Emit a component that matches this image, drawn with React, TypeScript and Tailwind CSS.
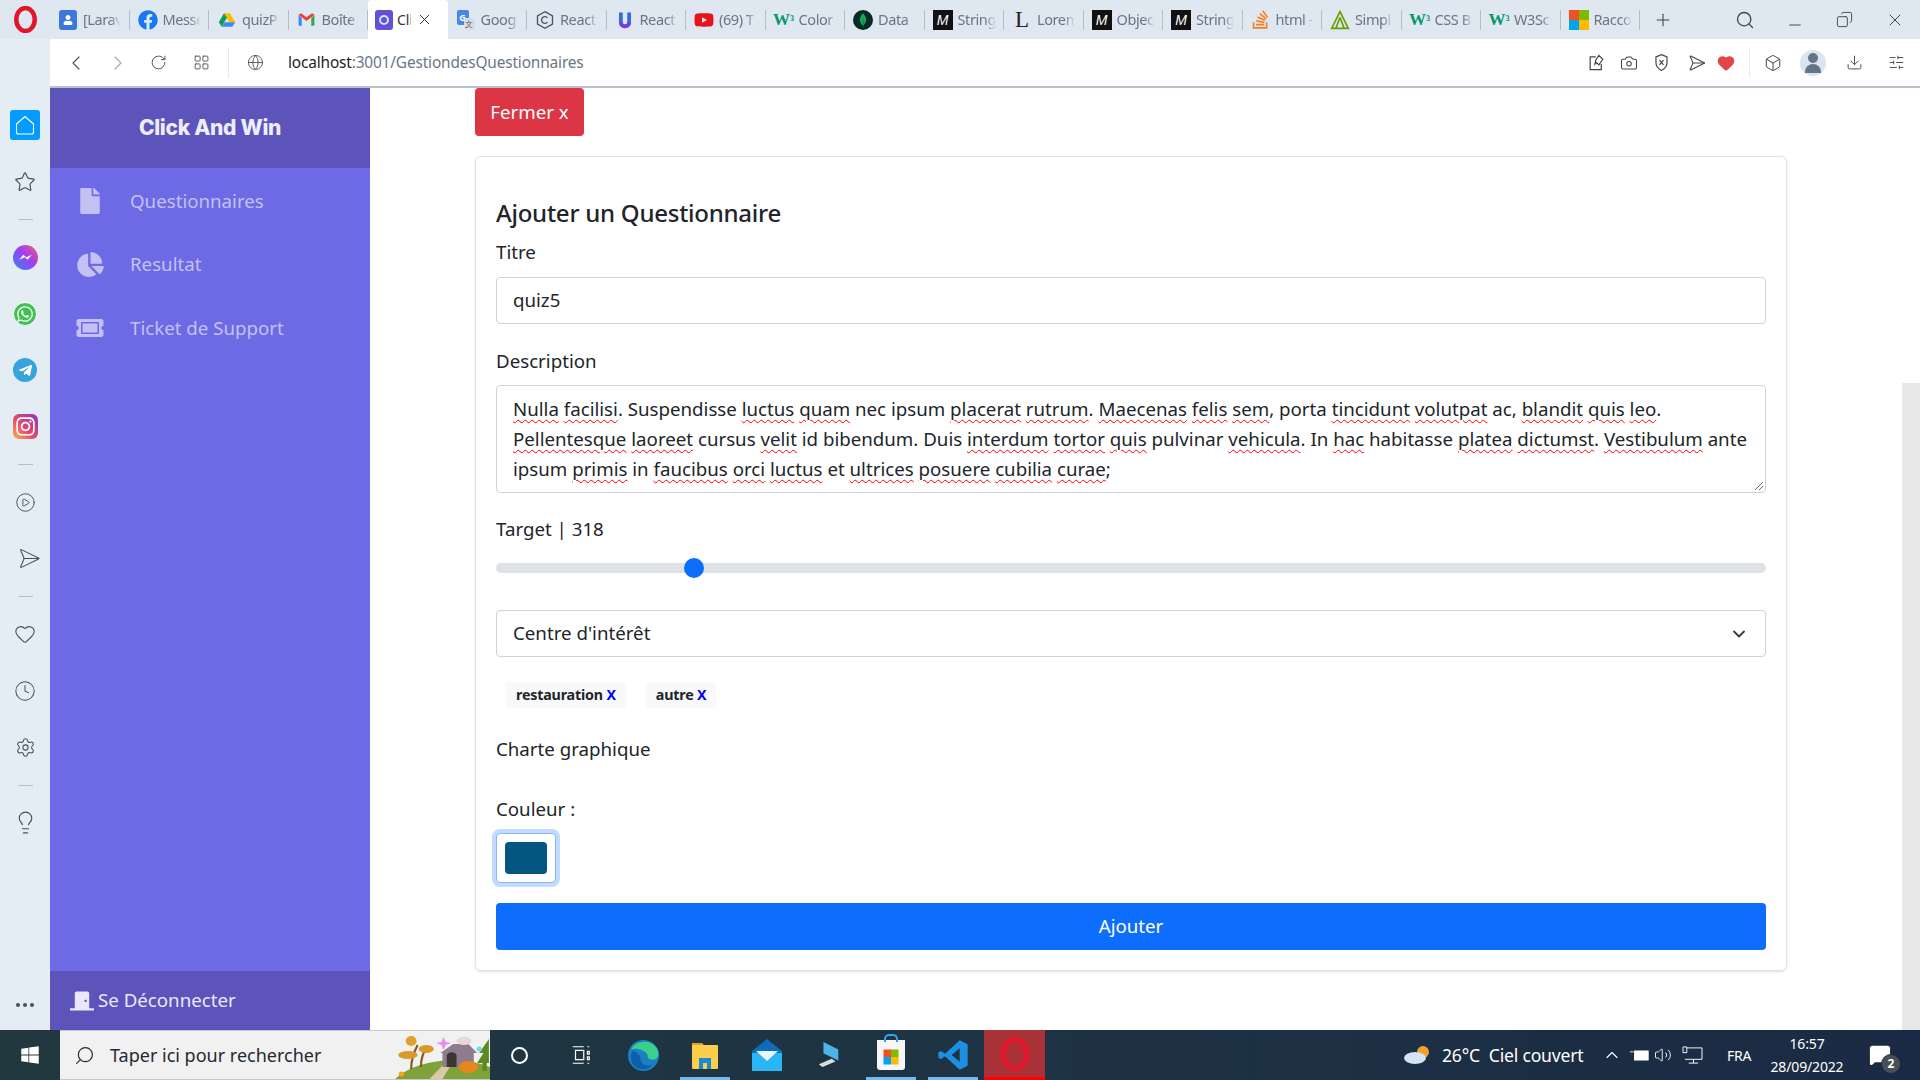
import React from 'react';
import {
  Search, Minus, Copy, X, Plus, ChevronLeft, ChevronRight, RotateCw, LayoutGrid, Globe, Camera,
  Box, Download, SlidersHorizontal, Heart, Send, Star, CirclePlay, Clock, Settings, Lightbulb,
  ChevronDown, ChevronUp, Volume2, MessageSquare,
} from 'lucide-react';
import {
  FaFacebook, FaUser, FaYoutube, FaStackOverflow, FaFile, FaChartPie, FaTicketAlt, FaDoorClosed,
  FaWhatsapp, FaTelegramPlane, FaInstagram, FaWindows,
} from 'react-icons/fa';
import { SiMongodb } from 'react-icons/si';

const uiFont = "font-['Noto_Sans',sans-serif]";

const OperaLogo = ({ className }: { className: string }) => (
  <svg viewBox="0 0 24 24" className={className}>
    <ellipse cx="12" cy="12" rx="8.2" ry="10.2" fill="none" stroke="#e0162b" strokeWidth="4" />
  </svg>
);

const DriveIcon = () => (
  <svg viewBox="0 0 24 24" className="w-[18px] h-[18px]">
    <path d="M8 3h8l7 12h-8z" fill="#fbbc04" />
    <path d="M8 3L1 15l4 6 7-12z" fill="#0f9d58" />
    <path d="M5 21h14l4-6H9z" fill="#4285f4" />
  </svg>
);

const GmailIcon = () => (
  <svg viewBox="0 0 24 24" className="w-[19px] h-[19px]">
    <path d="M2 6v14h4V10z" fill="#4285f4" />
    <path d="M22 6v14h-4V10z" fill="#34a853" />
    <path d="M2 6l10 8 10-8-3-2-7 5-7-5z" fill="#ea4335" />
  </svg>
);

const AppLogoIcon = () => (
  <div className="w-[18px] h-[20px] rounded-[3px] bg-[#6450d8] flex items-center justify-center">
    <div className="w-[10px] h-[10px] rounded-full border-2 border-[#cfe8ff]" />
  </div>
);

const ReactHexIcon = () => (
  <svg viewBox="0 0 24 24" className="w-[20px] h-[20px]" fill="none" stroke="#4b5563" strokeWidth="1.6">
    <path d="M12 2l9 5v10l-9 5-9-5V7z" />
    <path d="M15 9.5a4 4 0 1 0 0 5" />
  </svg>
);

const UIcon = () => (
  <svg viewBox="0 0 24 24" className="w-[18px] h-[22px]">
    <path d="M4 2h5v13a3 3 0 0 0 6 0V2h5v13a8 8 0 0 1-16 0z" fill="#2f6fe0" />
    <path d="M4 15a8 8 0 0 0 16 0h-5a3 3 0 0 1-6 0z" fill="#7b3fd6" />
  </svg>
);

const TranslateIcon = () => (
  <div className="relative w-[18px] h-[20px]">
    <div className="absolute left-0 top-0 w-[12px] h-[15px] rounded-[2px] bg-[#4a86e8] text-white text-[9px] leading-[15px] text-center font-bold">G</div>
    <div className="absolute right-0 bottom-0 w-[11px] h-[12px] rounded-[2px] bg-[#d8dde3] text-[#555] text-[8px] leading-[12px] text-center">文</div>
  </div>
);

const W3Icon = () => (
  <span className="text-[#04966a] text-[17px] font-bold leading-none font-['Liberation_Serif',serif]">
    W<sup className="text-[8px]">3</sup>
  </span>
);

const MediumIcon = () => (
  <span className="w-[20px] h-[20px] bg-[#111] text-white text-[14px] italic leading-[20px] text-center font-['Liberation_Sans',sans-serif]">M</span>
);

const LoremIcon = () => (
  <span className="text-[#222] text-[23px] leading-none font-['Liberation_Serif',serif]">L</span>
);

const SimplIcon = () => (
  <svg viewBox="0 0 24 24" className="w-[21px] h-[22px]" fill="none" stroke="#6aa100" strokeWidth="2">
    <path d="M12 2L2 22h20z" />
    <path d="M12 9L7 22M12 9l5 13" />
  </svg>
);

const MsIcon = () => (
  <div className="grid grid-cols-2 w-[20px] h-[20px]">
    <div className="bg-[#f25022]" />
    <div className="bg-[#7fba00]" />
    <div className="bg-[#00a4ef]" />
    <div className="bg-[#ffb900]" />
  </div>
);

type Tab = { label: string; icon: React.ReactNode; active?: boolean };

const tabs: Tab[] = [
  { label: '[Larav', icon: <div className="w-[18px] h-[20px] rounded-[3px] bg-[#3b78d8] flex items-center justify-center"><FaUser className="w-[10px] h-[10px] text-white" /></div> },
  { label: 'Messe', icon: <FaFacebook className="w-[20px] h-[20px] text-[#1877f2]" /> },
  { label: 'quizP', icon: <DriveIcon /> },
  { label: 'Boîte', icon: <GmailIcon /> },
  { label: 'Cli', icon: <AppLogoIcon />, active: true },
  { label: 'Goog', icon: <TranslateIcon /> },
  { label: 'React', icon: <ReactHexIcon /> },
  { label: 'React', icon: <UIcon /> },
  { label: '(69) T', icon: <FaYoutube className="w-[20px] h-[20px] text-[#e8131b]" /> },
  { label: 'Color', icon: <W3Icon /> },
  { label: 'Data', icon: <div className="w-[20px] h-[20px] rounded-full bg-[#062a24] flex items-center justify-center"><SiMongodb className="w-[14px] h-[14px] text-[#13aa52]" /></div> },
  { label: 'String', icon: <MediumIcon /> },
  { label: 'Lorem', icon: <LoremIcon /> },
  { label: 'Objec', icon: <MediumIcon /> },
  { label: 'String', icon: <MediumIcon /> },
  { label: 'html -', icon: <FaStackOverflow className="w-[19px] h-[21px] text-[#f48024]" /> },
  { label: 'Simpl', icon: <SimplIcon /> },
  { label: 'CSS B', icon: <W3Icon /> },
  { label: 'W3Sc', icon: <W3Icon /> },
  { label: 'Racco', icon: <MsIcon /> },
];

const TabBar = () => (
  <div className="h-[39px] flex items-stretch bg-[#dfe7f0] pl-[50px] shrink-0 relative">
    <div className="absolute left-[12px] top-[6px]"><OperaLogo className="w-[27px] h-[27px]" /></div>
    {tabs.map((t, i) => (
      <div
        key={i}
        className={
          t.active
            ? 'w-[79.5px] flex items-center gap-[3px] pl-[6px] bg-white rounded-t-[4px]'
            : 'w-[79.5px] flex items-center gap-[5px] pl-[8px] relative'
        }
      >
        <div className="w-[20px] flex justify-center shrink-0">{t.icon}</div>
        {t.active ? (
          <>
            <span className="text-[14px] text-[#333] w-[14px] overflow-hidden whitespace-nowrap">{t.label}</span>
            <X className="w-[17px] h-[17px] ml-[2px] text-[#333]" strokeWidth={1.4} />
          </>
        ) : (
          <span className="text-[14.5px] text-[#6b7685] overflow-hidden whitespace-nowrap w-[38px] tracking-[-0.4px] [mask-image:linear-gradient(90deg,#000_72%,transparent)]">{t.label}</span>
        )}
        {!t.active && <div className="absolute right-0 top-[10px] h-[20px] w-px bg-[#b4bec9]" />}
      </div>
    ))}
    <div className="flex items-center pl-[13px]">
      <Plus className="w-[20px] h-[20px] text-[#444]" strokeWidth={1.3} />
    </div>
    <div className="ml-auto flex items-center pr-[15px] text-[#444]">
      <Search className="w-[20px] h-[20px] mr-[31px]" strokeWidth={1.6} />
      <Minus className="w-[18px] h-[18px] mt-[10px] mr-[32px]" strokeWidth={1.3} />
      <Copy className="w-[17px] h-[17px] mr-[32px] -scale-x-100" strokeWidth={1.3} />
      <X className="w-[20px] h-[20px]" strokeWidth={1.2} />
    </div>
  </div>
);

const AddressBar = () => (
  <div className="h-[49px] flex bg-[#e4ecf4] shrink-0">
    <div className="w-[50px] shrink-0" />
    <div className="flex-1 flex items-center bg-white border-b-2 border-[#b7c0cb] text-[#555] relative">
      <ChevronLeft className="w-[24px] h-[24px] ml-[14px]" strokeWidth={1.2} />
      <ChevronRight className="w-[24px] h-[24px] ml-[18px] text-[#aab]" strokeWidth={1.2} />
      <RotateCw className="w-[17px] h-[17px] ml-[20px]" strokeWidth={1.4} />
      <LayoutGrid className="w-[17px] h-[17px] ml-[26px]" strokeWidth={1.3} />
      <div className="w-px h-[30px] bg-[#e4e7eb] ml-[18px]" />
      <Globe className="w-[17px] h-[17px] ml-[18px]" strokeWidth={1.3} />
      <div className="ml-[24px] text-[15.4px] tracking-[-0.15px] whitespace-nowrap">
        <span className="text-[#222]">localhost</span>
        <span className="text-[#6a7685]">:3001/GestiondesQuestionnaires</span>
      </div>
      <div className="ml-auto flex items-center text-[#444] pr-[15px]">
        <svg viewBox="0 0 24 24" className="w-[19px] h-[19px]" fill="none" stroke="currentColor" strokeWidth="1.5">
          <path d="M18 14v7H4V5h7" />
          <path d="M15 3l5 5-5 7-3-3-2 2 1-5z" />
        </svg>
        <Camera className="w-[18px] h-[18px] ml-[14px]" strokeWidth={1.4} />
        <svg viewBox="0 0 24 24" className="w-[19px] h-[19px] ml-[14px]" fill="none" stroke="currentColor" strokeWidth="1.5">
          <path d="M12 2l7 3v7c0 5-3 8-7 10-4-2-7-5-7-10V5z" />
          <path d="M9.5 9l5 6M14.5 9l-5 6" />
        </svg>
        <Send className="w-[18px] h-[18px] ml-[14px] rotate-45" strokeWidth={1.4} />
        <Heart className="w-[18px] h-[18px] ml-[14px] text-[#e04848]" fill="#e04848" />
        <div className="w-px h-[30px] bg-[#e8ebef] ml-[14px]" />
        <Box className="w-[18px] h-[18px] ml-[14px]" strokeWidth={1.3} />
        <div className="w-[26px] h-[26px] rounded-full bg-[#dbe5ef] ml-[18px] flex flex-col items-center justify-center">
          <div className="w-[10px] h-[10px] rounded-full bg-[#64748b]" />
          <div className="w-[16px] h-[9px] rounded-t-full bg-[#64748b] mt-[1px]" />
        </div>
        <Download className="w-[17px] h-[17px] ml-[20px]" strokeWidth={1.3} />
        <SlidersHorizontal className="w-[17px] h-[17px] ml-[25px]" strokeWidth={1.3} />
      </div>
    </div>
  </div>
);

const RailIcon = ({ children }: { children: React.ReactNode }) => (
  <div className="h-[56.5px] flex items-center justify-center text-[#4a5058]">{children}</div>
);

const RailDivider = () => (
  <div className="h-[19px] flex items-center justify-center">
    <div className="w-[15px] h-px bg-[#b7c0cb]" />
  </div>
);

const BrowserRail = () => (
  <div className="w-[50px] shrink-0 bg-[#e4ecf4] flex flex-col pt-[9px]">
    <RailIcon>
      <div className="w-[30px] h-[30px] rounded-[3px] bg-[#039bfd] flex items-center justify-center">
        <svg viewBox="0 0 24 24" className="w-[24px] h-[24px]" fill="none" stroke="#fff" strokeWidth="1.1">
          <path d="M12 3.5L20.5 11v8a2 2 0 0 1-2 2h-13a2 2 0 0 1-2-2v-8z" strokeLinejoin="round" />
        </svg>
      </div>
    </RailIcon>
    <RailIcon><Star className="w-[22px] h-[22px]" strokeWidth={1.3} /></RailIcon>
    <RailDivider />
    <RailIcon>
      <div className="w-[25px] h-[25px] rounded-full bg-[linear-gradient(45deg,#2b8cf5,#a33cf0_55%,#f2607a)] flex items-center justify-center">
        <svg viewBox="0 0 24 24" className="w-[17px] h-[17px]"><path d="M3 15l6-7 4 3.5L21 8l-6 7-4-3.5z" fill="#fff" /></svg>
      </div>
    </RailIcon>
    <RailIcon>
      <div className="w-[24px] h-[24px] rounded-full bg-[#3fc254] border border-white flex items-center justify-center">
        <FaWhatsapp className="w-[18px] h-[18px] text-white" />
      </div>
    </RailIcon>
    <RailIcon>
      <div className="w-[24px] h-[24px] rounded-full bg-[#37a4dc] flex items-center justify-center">
        <FaTelegramPlane className="w-[15px] h-[15px] text-white" />
      </div>
    </RailIcon>
    <RailIcon>
      <div className="w-[25px] h-[25px] rounded-[6px] bg-[linear-gradient(45deg,#fdb24e,#e5476b_45%,#8a3ab9)] flex items-center justify-center">
        <FaInstagram className="w-[21px] h-[21px] text-white" />
      </div>
    </RailIcon>
    <RailDivider />
    <RailIcon><CirclePlay className="w-[21px] h-[21px]" strokeWidth={1.1} /></RailIcon>
    <RailIcon><Send className="w-[23px] h-[23px] rotate-45" strokeWidth={1.1} /></RailIcon>
    <RailDivider />
    <RailIcon><Heart className="w-[22px] h-[22px]" strokeWidth={1.2} /></RailIcon>
    <RailIcon><Clock className="w-[22px] h-[22px]" strokeWidth={1.1} /></RailIcon>
    <RailIcon><Settings className="w-[21px] h-[21px]" strokeWidth={1.2} /></RailIcon>
    <RailDivider />
    <RailIcon><Lightbulb className="w-[25px] h-[25px]" strokeWidth={1.1} /></RailIcon>
    <div className="mt-auto pb-[23px] flex justify-center gap-[3px]">
      <div className="w-[4px] h-[4px] rounded-full bg-[#4a5058]" />
      <div className="w-[4px] h-[4px] rounded-full bg-[#4a5058]" />
      <div className="w-[4px] h-[4px] rounded-full bg-[#4a5058]" />
    </div>
  </div>
);

const navItems = [
  { label: 'Questionnaires', icon: <FaFile className="w-[20px] h-[26px]" /> },
  { label: 'Resultat', icon: <FaChartPie className="w-[27px] h-[25px]" /> },
  { label: 'Ticket de Support', icon: <FaTicketAlt className="w-[28px] h-[24px]" /> },
];

const Sidebar = () => (
  <aside className="w-[320px] shrink-0 flex flex-col bg-[#6e69e4]">
    <div className="h-[80px] bg-[#5c54bb] flex items-center justify-center text-[#eeedfb] text-[21px] font-extrabold font-['Inter',sans-serif] tracking-[-0.3px]">
      Click And Win
    </div>
    <nav className="flex flex-col pt-[1px]">
      {navItems.map((item) => (
        <div key={item.label} className="h-[63.5px] flex items-center text-[#c3c1f4]">
          <div className="w-[80px] pl-[25px] flex justify-start">
            <div className="w-[30px] flex justify-center">{item.icon}</div>
          </div>
          <span className="text-[18.7px]">{item.label}</span>
        </div>
      ))}
    </nav>
    <div className="mt-auto h-[59px] bg-[#5c54bb] flex items-center pl-[20px] text-[#e9e8fa]">
      <FaDoorClosed className="w-[24px] h-[22px]" />
      <span className="text-[18.7px] ml-[4px]">Se Déconnecter</span>
    </div>
  </aside>
);

const Typo = ({ children }: { children: React.ReactNode }) => (
  <span className="underline decoration-wavy decoration-[#f00] decoration-1 underline-offset-[3px]">{children}</span>
);

const Tag = ({ label }: { label: string }) => (
  <div className="h-[26px] px-[10px] rounded-[4px] bg-[#f8f9fa] flex items-center text-[14.3px] font-bold text-[#212529] tracking-[-0.2px]">
    {label}&nbsp;<span className="text-[#0000ff]">X</span>
  </div>
);

const QuestionnaireForm = () => (
  <main className="flex-1 bg-white flex min-w-0 text-[#212529] text-[18.7px]">
    <div className="flex-1 pl-[105px] pr-[115px] min-w-0">
      <button className="h-[48px] w-[109px] rounded-[4px] bg-[#dc3545] text-white text-[18.7px]">Fermer x</button>
      <section className="mt-[20px] h-[815px] border border-[#dfe3e7] rounded-[6px] shadow-sm px-[20px] flex flex-col">
        <h2 className="mt-[38px] text-[24px] leading-[36px] font-medium tracking-[-0.25px]">Ajouter un Questionnaire</h2>
        <label className="mt-[6px] leading-[30px]">Titre</label>
        <div className="mt-[10px] h-[47px] border border-[#ced4da] rounded-[4px] px-[16px] flex items-center">quiz5</div>
        <label className="mt-[22px] leading-[30px]">Description</label>
        <div className="mt-[9px] h-[108px] border border-[#ced4da] rounded-[4px] px-[16px] pt-[8px] leading-[30px] whitespace-nowrap relative">
          <div>
            <Typo>Nulla</Typo> <Typo>facilisi</Typo>. Suspendisse <Typo>luctus</Typo> <Typo>quam</Typo> nec ipsum <Typo>placerat</Typo> <Typo>rutrum</Typo>. <Typo>Maecenas</Typo> <Typo>felis</Typo> <Typo>sem</Typo>, porta <Typo>tincidunt</Typo> <Typo>volutpat</Typo> ac, <Typo>blandit</Typo> <Typo>quis</Typo> <Typo>leo</Typo>.
          </div>
          <div>
            <Typo>Pellentesque</Typo> <Typo>laoreet</Typo> cursus <Typo>velit</Typo> id bibendum. Duis <Typo>interdum</Typo> <Typo>tortor</Typo> <Typo>quis</Typo> pulvinar <Typo>vehicula</Typo>. In <Typo>hac</Typo> habitasse <Typo>platea</Typo> <Typo>dictumst</Typo>. <Typo>Vestibulum</Typo> ante
          </div>
          <div>
            ipsum <Typo>primis</Typo> in <Typo>faucibus</Typo> <Typo>orci</Typo> <Typo>luctus</Typo> et <Typo>ultrices</Typo> <Typo>posuere</Typo> <Typo>cubilia</Typo> <Typo>curae</Typo>;
          </div>
          <svg viewBox="0 0 10 10" className="absolute right-[1px] bottom-[1px] w-[10px] h-[10px]" stroke="#666" strokeWidth="1">
            <path d="M1 9L9 1M5 9l4-4" />
          </svg>
        </div>
        <label className="mt-[21px] leading-[30px]">Target | 318</label>
        <div className="mt-[14px] h-[20px] flex items-center relative">
          <div className="w-full h-[10px] rounded-full bg-[#dee2e6]" />
          <div className="absolute left-[188px] top-0 w-[20px] h-[20px] rounded-full bg-[#0d6efd]" />
        </div>
        <div className="mt-[32px] h-[47px] border border-[#ced4da] rounded-[4px] pl-[16px] pr-[16px] flex items-center justify-between">
          <span>Centre d'intérêt</span>
          <ChevronDown className="w-[20px] h-[20px] text-[#343a40]" strokeWidth={2.2} />
        </div>
        <div className="mt-[25px] ml-[10px] flex gap-[20px]">
          <Tag label="restauration" />
          <Tag label="autre" />
        </div>
        <div className="mt-[26px] leading-[30px]">Charte graphique</div>
        <label className="mt-[30px] leading-[30px]">Couleur :</label>
        <div className="mt-[9px] w-[60px] h-[50px] rounded-[4px] border border-[#86b7fe] ring-4 ring-[#c2dbfe] bg-white p-[8px]">
          <div className="w-full h-full rounded-[4px] bg-[#02567f]" />
        </div>
        <button className="mt-[20px] h-[47px] rounded-[4px] bg-[#0d6efd] text-white text-[18.7px]">Ajouter</button>
      </section>
    </div>
    <div className="w-[18px] shrink-0 pt-[295px]">
      <div className="w-full h-full bg-[#e8e8e8]" />
    </div>
  </main>
);

const SearchArt = () => (
  <svg viewBox="0 0 100 48" preserveAspectRatio="none" className="w-[108px] h-[48px] shrink-0">
    <path d="M12 48c20-20 60-24 88-12v12z" fill="#7fa33a" />
    <path d="M44 48l16-18h6L56 48z" fill="#d8c9a8" />
    <path d="M27 38c0-10 3-18 6-24M36 36c0-8 2-14 5-20" stroke="#8a5a1f" strokeWidth="2" fill="none" />
    <circle cx="27" cy="10" r="5" fill="#e0a030" />
    <ellipse cx="24" cy="24" rx="9" ry="4" fill="#d99a2b" />
    <ellipse cx="41" cy="18" rx="7" ry="4" fill="#d99a2b" />
    <path d="M54 22l12-9 14 0 8 9-3 0v14H56V22z" fill="#8d7d8d" />
    <path d="M60 36V24a5 5 0 0 1 9 0v12z" fill="#3d3535" />
    <ellipse cx="80" cy="36" rx="9" ry="6" fill="#e8861e" />
    <path d="M99 8l-9 14h4l-6 10h5v8h4v-8h2z" fill="#5d8a1e" />
    <path d="M57 6l2 5 5 1-5 2-2 5-2-5-5-2 5-1z" fill="#e78df2" />
    <ellipse cx="76" cy="10" rx="7" ry="4" fill="#ecd6d6" />
    <circle cx="90" cy="18" r="2.5" fill="#6fdcec" />
    <circle cx="18" cy="43" r="2.5" fill="#f5a900" />
  </svg>
);

const TaskIcon = ({ children, underline }: { children: React.ReactNode; underline?: boolean }) => (
  <div className="w-[62px] h-full relative flex items-center justify-center">
    {children}
    {underline && <div className="absolute bottom-0 left-[6px] right-[6px] h-[3px] bg-[#76b9ed]" />}
  </div>
);

const Taskbar = () => (
  <footer className="h-[50px] shrink-0 flex items-center bg-[linear-gradient(90deg,#21383f,#1e3343_50%,#1a2a44)] text-white">
    <div className="w-[60px] flex justify-center">
      <FaWindows className="w-[20px] h-[20px]" />
    </div>
    <div className="w-[430px] h-full bg-[#f1f1f1] border-y border-[#c9c9c9] flex items-center pl-[14px] text-[#1f2a33]">
      <Search className="w-[21px] h-[21px] -scale-x-100" strokeWidth={1.3} />
      <span className="ml-[15px] text-[18px] flex-1 whitespace-nowrap">Taper ici pour rechercher</span>
      <SearchArt />
    </div>
    <div className="-ml-[2px] flex items-center h-full">
      <TaskIcon><div className="w-[17px] h-[17px] rounded-full border-[2.5px] border-white" /></TaskIcon>
      <TaskIcon>
        <svg viewBox="0 0 24 24" className="w-[22px] h-[22px]" fill="none" stroke="#fff" strokeWidth="1.3">
          <path d="M3 3h12M3 21h12M6 7h9v10H6zM19 3h2M19 8h2v3h-2zM19 14h2v3h-2zM19 21h2" />
        </svg>
      </TaskIcon>
      <TaskIcon>
        <svg viewBox="0 0 32 32" className="w-[33px] h-[33px]">
          <circle cx="16" cy="16" r="15" fill="#1c7fc4" />
          <path d="M4 10C8 2 22-1 29 9c3 6 1 11-4 11-3 0-5-1-5-3 1-6-12-9-16-7z" fill="#38d08c" />
          <path d="M13 18c0 6 6 10 12 7-5 6-14 6-19 0-3-4-3-10 0-14 2 2 6 3 7 7z" fill="#0c5fa8" />
        </svg>
      </TaskIcon>
      <TaskIcon underline>
        <svg viewBox="0 0 28 30" className="w-[28px] h-[30px]">
          <path d="M1 3h10l3 3H1z" fill="#d9a32b" />
          <rect x="1" y="5" width="26" height="24" rx="1" fill="#fbcf4b" />
          <path d="M8 29V18h12v11h-4v-6h-4v6z" fill="#1e88d0" />
        </svg>
      </TaskIcon>
      <TaskIcon>
        <svg viewBox="0 0 30 32" className="w-[30px] h-[32px]">
          <path d="M15 0l15 12v20H0V12z" fill="#0f6cbd" />
          <path d="M0 14h30v18H0z" fill="#29b6f6" />
          <path d="M4 12h22L15 22z" fill="#e8f4fc" />
        </svg>
      </TaskIcon>
      <TaskIcon>
        <svg viewBox="0 0 28 30" className="w-[26px] h-[28px]">
          <path d="M8 1l16 8v12L8 13z" fill="#4fb3ea" />
          <path d="M3 25l14-6 4 3-14 6z" fill="#d9dde0" />
        </svg>
      </TaskIcon>
      <TaskIcon underline>
        <div className="w-[28px] h-[30px] bg-[#f6f6f6] rounded-b-[3px] relative flex items-center justify-center">
          <div className="absolute -top-[6px] left-[7px] w-[14px] h-[8px] border-2 border-b-0 border-[#29a8e8] rounded-t-[5px]" />
          <div className="mt-[4px] scale-75"><MsIcon /></div>
        </div>
      </TaskIcon>
      <TaskIcon underline>
        <svg viewBox="0 0 24 24" className="w-[32px] h-[32px]">
          <path d="M17 1l6 3v16l-6 3L6 13l-3 2-2-1V10l2-1 3 2zM17 7l-6 5 6 5z" fill="#1d8fe0" fillRule="evenodd" />
        </svg>
      </TaskIcon>
      <div className="w-[61px] h-full bg-[#a83237] border-b-[3px] border-[#ff0000] flex items-center justify-center">
        <OperaLogo className="w-[34px] h-[34px]" />
      </div>
    </div>
    <div className="ml-auto flex items-center h-full">
      <svg viewBox="0 0 28 20" className="w-[28px] h-[20px]">
        <circle cx="20" cy="7" r="6" fill="#f0a22e" />
        <ellipse cx="12" cy="13" rx="11" ry="6" fill="#d6e3f2" />
      </svg>
      <span className="ml-[11px] w-[142px] whitespace-nowrap text-[17.6px] tracking-[-0.2px]">26°C&nbsp; Ciel couvert</span>
      <ChevronUp className="w-[20px] h-[20px] ml-[18px]" strokeWidth={1.3} />
      <svg viewBox="0 0 22 14" className="w-[20px] h-[13px] ml-[8px]" fill="none" stroke="#fff">
        <rect x="5" y="2" width="15" height="10" fill="#fff" />
        <path d="M0 3h4" />
      </svg>
      <Volume2 className="w-[18px] h-[18px] ml-[4px]" strokeWidth={1.2} />
      <svg viewBox="0 0 22 20" className="w-[21px] h-[19px] ml-[10px]" fill="none" stroke="#fff" strokeWidth="1">
        <path d="M5 2h16v12H3M12 14v4M7 18h10M1 1h4v6H1z" />
      </svg>
      <span className="ml-[24px] w-[25px] text-[14px] tracking-[-0.2px]">FRA</span>
      <div className="ml-[17px] w-[76px] flex flex-col items-center text-[14px] leading-[23px] tracking-[-0.15px]">
        <span>16:57</span>
        <span>28/09/2022</span>
      </div>
      <div className="ml-[24px] mr-[29px] relative w-[22px] h-[22px]">
        <MessageSquare className="w-[22px] h-[22px] text-white" fill="#fff" />
        <div className="absolute -right-[10px] -bottom-[8px] w-[20px] h-[20px] rounded-full bg-[#4a4f55] border border-[#1a2a44] text-[12px] font-bold leading-[18px] text-center">2</div>
      </div>
    </div>
  </footer>
);

export default function App() {
  return (
    <div className={`w-[1920px] h-[1080px] overflow-hidden flex flex-col ${uiFont}`}>
      <TabBar />
      <AddressBar />
      <div className="flex-1 flex min-h-0">
        <BrowserRail />
        <Sidebar />
        <QuestionnaireForm />
      </div>
      <Taskbar />
    </div>
  );
}
